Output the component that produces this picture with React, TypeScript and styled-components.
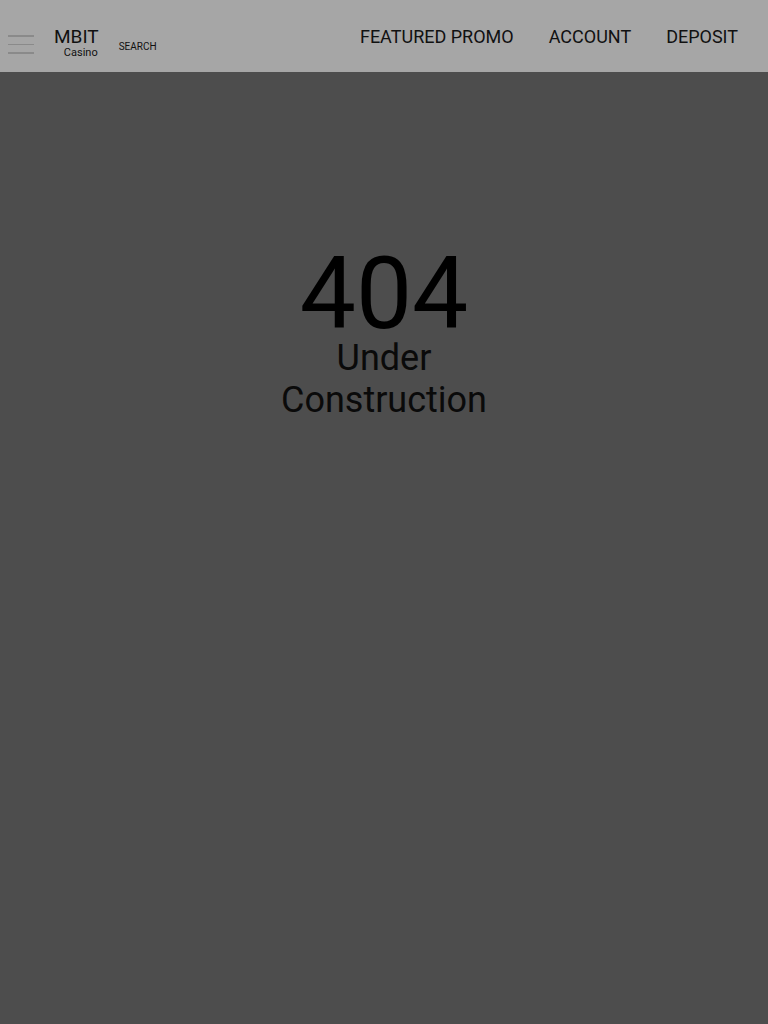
import React from "react";
import styled, { createGlobalStyle } from "styled-components";

const Global = createGlobalStyle`
  html, body { margin: 0; padding: 0; background: #4d4d4d; }
  body { font-family: Roboto, "Liberation Sans", Arial, sans-serif; color: #000; }
  * { box-sizing: border-box; }
`;

const Page = styled.div`
  min-height: 1024px;
  display: flex;
  flex-direction: column;
  background: #4d4d4d;
`;

const Header = styled.header`
  height: 72px;
  background: #a6a6a6;
  display: flex;
  align-items: flex-start;
  justify-content: space-between;
  padding: 0 30px 0 8px;
`;

const Left = styled.div`
  display: flex;
  align-items: flex-start;
  margin-top: 27px;
`;

const Burger = styled.button`
  width: 26px;
  margin-top: 8px;
  padding: 0;
  border: 0;
  background: transparent;
  display: flex;
  flex-direction: column;
  gap: 7px;
  cursor: pointer;
  span {
    display: block;
    height: 1.5px;
    background: #8a8a8a;
  }
`;

const Brand = styled.div`
  margin-left: 20px;
  display: flex;
  flex-direction: column;
  align-items: flex-end;
  color: #111;
`;

const BrandName = styled.div`
  font-size: 19px;
  line-height: 20px;
`;

const BrandSub = styled.div`
  font-size: 11px;
  line-height: 11px;
  margin-right: 1px;
`;

const Search = styled.div`
  margin-left: 20px;
  margin-top: 14px;
  font-size: 10px;
  color: #111;
`;

const Nav = styled.nav`
  align-self: center;
  display: flex;
  gap: 35px;
`;

const NavItem = styled.a`
  font-size: 18px;
  color: #111;
  text-decoration: none;
`;

const Main = styled.main`
  flex: 1;
  display: flex;
  flex-direction: column;
  align-items: center;
  padding-top: 179px;
`;

const Code = styled.h1`
  margin: 0;
  font-size: 100px;
  font-weight: 400;
  line-height: 86px;
  color: #000;
`;

const Message = styled.p`
  margin: 0;
  font-size: 36px;
  line-height: 42px;
  max-width: 230px;
  text-align: center;
  color: #0a0a0a;
`;

export default function App() {
  return (
    <Page>
      <Global />
      <Header>
        <Left>
          <Burger aria-label="menu">
            <span />
            <span />
            <span />
          </Burger>
          <Brand>
            <BrandName>MBIT</BrandName>
            <BrandSub>Casino</BrandSub>
          </Brand>
          <Search>SEARCH</Search>
        </Left>
        <Nav>
          <NavItem href="#">FEATURED PROMO</NavItem>
          <NavItem href="#">ACCOUNT</NavItem>
          <NavItem href="#">DEPOSIT</NavItem>
        </Nav>
      </Header>
      <Main>
        <Code>404</Code>
        <Message>Under Construction</Message>
      </Main>
    </Page>
  );
}
